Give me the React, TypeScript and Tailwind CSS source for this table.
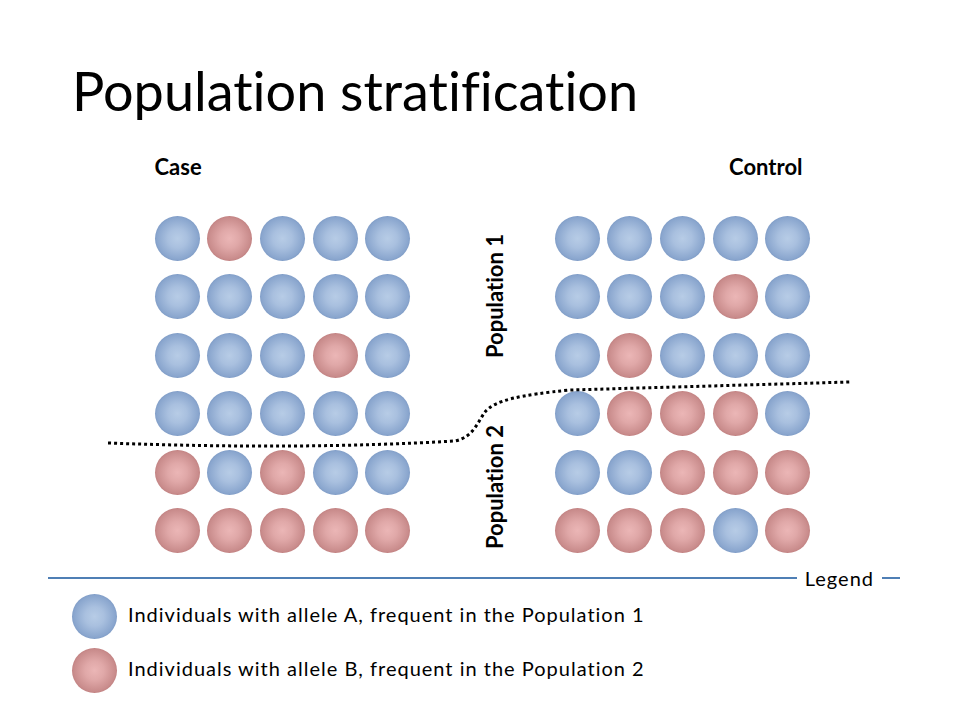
import React from "react";

const left = ["ABAAA", "AAAAA", "AAABA", "AAAAA", "BABAA", "BBBBB"];
const right = ["AAAAA", "AAABA", "ABAAA", "ABBBA", "AABBB", "BBBAB"];

function Dot({ t }: { t: string }) {
  return t === "A" ? (
    <div className="w-[45px] h-[45px] rounded-full bg-[radial-gradient(circle,#b7cce6_0%,#a9c0df_30%,#8aa6ce_65%,#6584b3_88%,#4f6c9a_100%)]" />
  ) : (
    <div className="w-[45px] h-[45px] rounded-full bg-[radial-gradient(circle,#ebb6b6_0%,#e0a8a8_30%,#c98c8c_65%,#ae6666_88%,#954b4b_100%)]" />
  );
}

function Grid({ rows }: { rows: string[] }) {
  return (
    <div className="grid grid-cols-[repeat(5,45px)] gap-x-[7.7px] gap-y-[13.4px]">
      {rows.flatMap((r, i) => r.split("").map((c, j) => <Dot key={i + "-" + j} t={c} />))}
    </div>
  );
}

export default function App() {
  return (
    <div className="relative w-[960px] h-[720px] bg-white overflow-hidden text-black font-['Lato','Open_Sans',sans-serif] [font-variant-ligatures:none]">
      <div className="h-[150px] pt-[64px] pl-[72px]">
        <h1 className="text-[54px] leading-none font-normal">Population stratification</h1>
      </div>

      <div className="grid grid-cols-[256px_144px_256px] pl-[154.5px]">
        <div className="flex flex-col">
          <div className="h-[66px] pt-[6px] text-[22px] leading-none font-bold">Case</div>
          <Grid rows={left} />
        </div>
        <div className="flex flex-col items-center pl-[24px] text-[22px] leading-none font-bold">
          <div className="mt-[84px] [writing-mode:vertical-rl] rotate-180">Population 1</div>
          <div className="mt-[67px] [writing-mode:vertical-rl] rotate-180">Population 2</div>
        </div>
        <div className="flex flex-col">
          <div className="h-[66px] pt-[6px] pr-[8px] text-[22px] leading-none font-bold text-right">Control</div>
          <Grid rows={right} />
        </div>
      </div>

      <div className="mt-[13px] h-[24px] flex items-center pl-[48px] pr-[60px]">
        <div className="flex-1 h-[2px] bg-[#4f7fb5]" />
        <div className="px-[8px] text-[20px] leading-none tracking-[1px]">Legend</div>
        <div className="w-[18px] h-[2px] bg-[#4f7fb5]" />
      </div>

      <div className="mt-[4px] pl-[72px] flex flex-col gap-[9px] text-[20px] leading-none tracking-[1px]">
        <div className="flex items-center gap-[11px]">
          <Dot t="A" />
          <span className="-mt-[4px]">Individuals with allele A, frequent in the Population 1</span>
        </div>
        <div className="flex items-center gap-[11px]">
          <Dot t="B" />
          <span className="-mt-[4px]">Individuals with allele B, frequent in the Population 2</span>
        </div>
      </div>

      <svg className="absolute inset-0 pointer-events-none" width="960" height="720" viewBox="0 0 960 720">
        <path
          d="M108,443 Q300,450 455,441 C474,437 478,421 485,412 C495,400 520,395 570,390 L850,382"
          fill="none"
          stroke="#000"
          strokeWidth="3"
          strokeDasharray="3 3"
        />
      </svg>
    </div>
  );
}
